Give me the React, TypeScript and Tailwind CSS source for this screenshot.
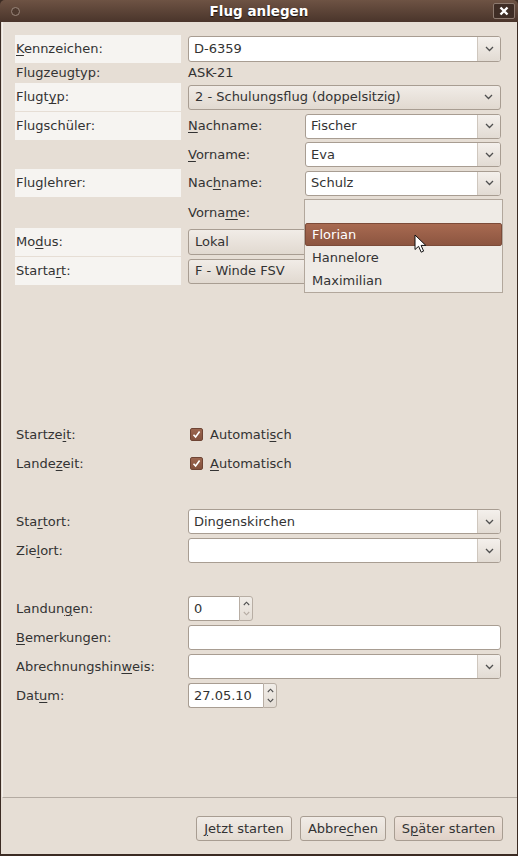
import React from "react";
import clsx from "clsx";

function U({ c }: { c: string }) {
  return <span className="underline decoration-1 underline-offset-[2px]">{c}</span>;
}

function Chevron({ color = "#505050" }: { color?: string }) {
  return (
    <svg width="9" height="6" viewBox="0 0 9 6">
      <path d="M1 1l3.5 3.5L8 1" fill="none" stroke={color} strokeWidth="1.3" />
    </svg>
  );
}

function ComboEntry({ value, className }: { value?: string; className?: string }) {
  return (
    <div className={clsx("flex overflow-hidden rounded-[3px] border border-[#a89d92] bg-white", className)}>
      <div className="flex flex-1 items-center px-[5px]">{value}</div>
      <div className="flex w-[23px] items-center justify-center border-l border-[#cfc7be] bg-linear-to-b from-[#f4f0ec] to-[#e2dbd3]">
        <Chevron />
      </div>
    </div>
  );
}

function Combo({ value, className }: { value: string; className?: string }) {
  return (
    <div
      className={clsx(
        "flex items-center rounded-[3px] border border-[#a89d92] bg-linear-to-b from-[#f1ece7] to-[#e1d9d0] pl-[6px] pr-[7px]",
        className
      )}
    >
      <span className="flex-1">{value}</span>
      <Chevron />
    </div>
  );
}

function Entry({ value, className }: { value?: string; className?: string }) {
  return (
    <div className={clsx("flex items-center rounded-[3px] border border-[#a89d92] bg-white px-[5px]", className)}>
      {value}
    </div>
  );
}

function Spin({ value, width }: { value: string; width: string }) {
  return (
    <div className={clsx("flex h-[25px]", width)}>
      <div className="flex flex-1 items-center rounded-l-[3px] border border-r-0 border-[#a89d92] bg-white px-[5px]">
        {value}
      </div>
      <div className="flex w-[14px] flex-col items-center justify-around rounded-r-[3px] border border-[#b8aea4] bg-linear-to-b from-[#f1ede8] to-[#e4ddd5] py-[2px]">
        <svg width="7" height="5" viewBox="0 0 7 5">
          <path d="M0.8 4L3.5 1.2L6.2 4" fill="none" stroke="#505050" strokeWidth="1.1" />
        </svg>
        <svg width="7" height="5" viewBox="0 0 7 5">
          <path d="M0.8 1L3.5 3.8L6.2 1" fill="none" stroke={value === "0" ? "#b5aca3" : "#505050"} strokeWidth="1.1" />
        </svg>
      </div>
    </div>
  );
}

function Check() {
  return (
    <div className="flex h-[13px] w-[13px] items-center justify-center rounded-[2px] border border-[#6e4434] bg-linear-to-b from-[#9c664f] to-[#83513d]">
      <svg width="9" height="9" viewBox="0 0 9 9">
        <path d="M1.5 4.8L3.6 7L7.6 1.6" fill="none" stroke="#fff" strokeWidth="1.6" />
      </svg>
    </div>
  );
}

function Row({
  h,
  label,
  light,
  children,
}: {
  h: string;
  label: React.ReactNode;
  light?: boolean;
  children?: React.ReactNode;
}) {
  return (
    <div className={clsx("flex", h)}>
      <div className={clsx("flex w-[166px] items-center pl-px", light && "bg-[#f6f4f1]")}>{label}</div>
      <div className="ml-[7px] flex flex-1 items-center">{children}</div>
    </div>
  );
}

function Button({ children, className }: { children: React.ReactNode; className?: string }) {
  return (
    <div
      className={clsx(
        "flex h-[25px] items-center justify-center rounded-[3px] border border-[#a89d92] bg-linear-to-b",
        className
      )}
    >
      {children}
    </div>
  );
}

export default function App() {
  return (
    <div className="relative flex h-[856px] w-[518px] flex-col overflow-hidden bg-[#3b2b23] font-['DejaVu_Sans',sans-serif] text-[13px] text-[#333]">
      <div className="relative flex h-[22px] shrink-0 items-center justify-center rounded-t-[5px] bg-linear-to-b from-[#6e5344] to-[#4a352b]">
        <div className="absolute left-[11px] top-[7px] h-[9px] w-[9px] rounded-full border border-[#9a877c] bg-[#4f3a2f]" />
        <span className="text-[13.5px] font-bold text-white [text-shadow:0_1px_1px_#1a120e]">Flug anlegen</span>
        <div className="absolute right-[3px] top-[3px] flex h-[16px] w-[22px] items-center justify-center rounded-[2px] border border-[#8d7a6f] bg-[#3f2d25]">
          <svg width="10" height="10" viewBox="0 0 10 10">
            <path d="M1.5 1.5L8.5 8.5M8.5 1.5L1.5 8.5" stroke="#fff" strokeWidth="2.4" />
          </svg>
        </div>
      </div>

      <div className="mx-px mb-[2px] flex flex-1 flex-col bg-[#e6ded5]">
        <div className="ml-[1px] flex h-[776px] flex-col border-b border-l border-[#b4aba2] border-l-[#f4f0ec] pl-[12px] pr-[16px] pt-[13px]">
          <Row h="h-[28px]" light label={<span><U c="K" />ennzeichen:</span>}>
            <ComboEntry value="D-6359" className="h-[26px] w-full" />
          </Row>
          <Row h="h-[20px]" label="Flugzeugtyp:">
            ASK-21
          </Row>
          <Row h="h-[28px]" light label={<span>Flugt<U c="y" />p:</span>}>
            <Combo value="2 - Schulungsflug (doppelsitzig)" className="h-[25px] w-full" />
          </Row>
          <div className="h-px" />
          <Row h="h-[28px]" light label="Flugschüler:">
            <span className="w-[117px]"><U c="N" />achname:</span>
            <ComboEntry value="Fischer" className="h-[25px] flex-1" />
          </Row>
          <Row h="h-[29px]" label="">
            <span className="w-[117px]"><U c="V" />orname:</span>
            <ComboEntry value="Eva" className="h-[25px] flex-1" />
          </Row>
          <Row h="h-[28px]" light label="Fluglehrer:">
            <span className="w-[117px]">Nac<U c="h" />name:</span>
            <ComboEntry value="Schulz" className="h-[25px] flex-1" />
          </Row>
          <Row h="h-[31px]" label="">
            <span className="w-[117px]">Vorna<U c="m" />e:</span>
            <ComboEntry className="h-[25px] flex-1" />
          </Row>
          <Row h="h-[28px]" light label={<span>Mo<U c="d" />us:</span>}>
            <Combo value="Lokal" className="h-[26px] w-full" />
          </Row>
          <div className="h-px" />
          <Row h="h-[28px]" light label={<span>Starta<U c="r" />t:</span>}>
            <Combo value="F - Winde FSV" className="h-[25px] w-full" />
          </Row>

          <div className="h-[135px]" />

          <Row h="h-[29px]" label={<span>Startze<U c="i" />t:</span>}>
            <div className="ml-[2px] flex items-center gap-[7px]">
              <Check />
              <span>Automati<U c="s" />ch</span>
            </div>
          </Row>
          <Row h="h-[29px]" label={<span>Lande<U c="z" />eit:</span>}>
            <div className="ml-[2px] flex items-center gap-[7px]">
              <Check />
              <span><U c="A" />utomatisch</span>
            </div>
          </Row>

          <div className="h-[29px]" />

          <Row h="h-[29px]" label={<span>Sta<U c="r" />tort:</span>}>
            <ComboEntry value="Dingenskirchen" className="h-[25px] w-full" />
          </Row>
          <Row h="h-[29px]" label={<span>Zie<U c="l" />ort:</span>}>
            <ComboEntry className="h-[25px] w-full" />
          </Row>

          <div className="h-[29px]" />

          <Row h="h-[29px]" label={<span>Landun<U c="g" />en:</span>}>
            <Spin value="0" width="w-[65px]" />
          </Row>
          <Row h="h-[29px]" label={<span><U c="B" />emerkungen:</span>}>
            <Entry className="h-[25px] w-full" />
          </Row>
          <Row h="h-[29px]" label={<span>Abrechnungshin<U c="w" />eis:</span>}>
            <ComboEntry className="h-[25px] w-full" />
          </Row>
          <Row h="h-[29px]" label={<span>Dat<U c="u" />m:</span>}>
            <Spin value="27.05.10" width="w-[89px]" />
          </Row>
        </div>

        <div className="flex flex-1 justify-end gap-[8px] pr-[14px] pt-[18px]">
          <Button className="w-[96px] from-[#f1ece7] to-[#e3dbd2]">
            <span><U c="J" />etzt starten</span>
          </Button>
          <Button className="w-[86px] from-[#f1ece7] to-[#e3dbd2]">
            <span>Abbre<U c="c" />hen</span>
          </Button>
          <Button className="w-[109px] border-[#9c8f84] from-[#efe4dc] to-[#e0d2c8]">
            <span>S<U c="p" />äter starten</span>
          </Button>
        </div>
      </div>

      <div className="absolute left-[304px] top-[199px] flex w-[199px] flex-col border border-[#b2a79c] bg-[#efebe6]">
        <div className="h-[23px]" />
        <div className="flex h-[23px] items-center rounded-[2px] border border-[#7c4b39] bg-linear-to-b from-[#a86a51] to-[#8c5540] pl-[6px] text-white">
          Florian
        </div>
        <div className="flex h-[23px] items-center pl-[7px]">Hannelore</div>
        <div className="flex h-[23px] items-center pl-[7px]">Maximilian</div>
      </div>

      <svg className="absolute left-[414px] top-[234px]" width="14" height="20" viewBox="0 0 14 20">
        <path
          d="M1 1L1 15.5L4.6 12.3L7.2 18.2L9.6 17.1L7.1 11.4L11.8 11.4Z"
          fill="#fff"
          stroke="#111"
          strokeWidth="1"
          strokeLinejoin="round"
        />
      </svg>
    </div>
  );
}
